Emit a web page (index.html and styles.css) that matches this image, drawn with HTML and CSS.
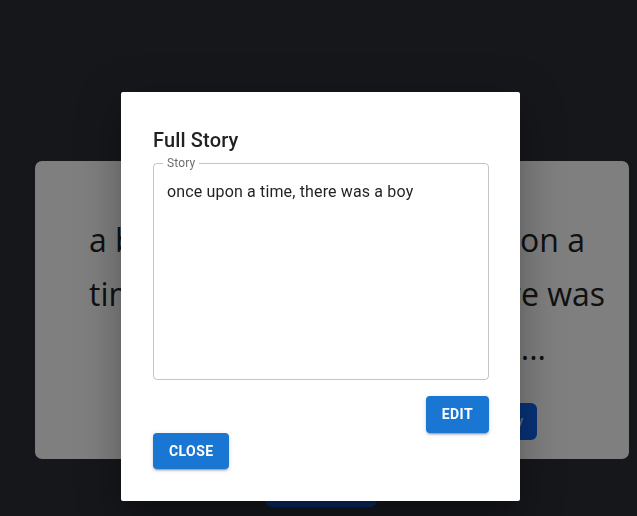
FILE: index.html
```html
<!DOCTYPE html>
<html lang="en">
<head>
<meta charset="utf-8">
<title>Story Maker</title>
<link rel="stylesheet" href="styles.css">
</head>
<body>
<div class="app">
  <h1 class="app-title">STORY MAKER</h1>
  <section class="story-card">
    <div class="preview">
      <div class="line line-1"><span>a boy who lived</span><span>once upon a</span></div>
      <div class="line line-2"><span>time, long ago,</span><span>there was</span></div>
      <div class="line line-3"><span>a little boy ...</span></div>
    </div>
    <div class="card-actions">
      <button class="card-btn">Read Full Story</button>
    </div>
  </section>
  <div class="bottom-actions">
    <button class="page-btn">New Story</button>
  </div>
</div>

<div class="backdrop"></div>
<div class="dialog" role="dialog">
  <h2 class="dialog-title">Full Story</h2>
  <div class="field">
    <span class="field-label">Story</span>
    <div class="field-input">once upon a time, there was a boy</div>
  </div>
  <div class="edit-row">
    <button class="btn">Edit</button>
  </div>
  <div class="close-row">
    <button class="btn">Close</button>
  </div>
</div>
</body>
</html>
```
FILE: styles.css
```css
html, body {
  margin: 0;
  padding: 0;
}
body {
  background: #2c2e36;
  min-height: 100vh;
  font-family: "Open Sans", "Liberation Sans", sans-serif;
  overflow: hidden;
}
.app {
  padding: 86px 0 0 5px;
}
.app-title {
  margin: 0;
  text-align: center;
  font-family: "Open Sans", sans-serif;
  font-weight: 700;
  font-size: 36px;
  line-height: 44px;
  letter-spacing: 0.5px;
  color: #ffffff;
}
.story-card {
  margin: 31px 0 0 30px;
  width: 594px;
  box-sizing: border-box;
  background: #ffffff;
  border-radius: 7px;
  padding: 52px 20px 19px 54px;
  color: #222222;
}
.preview {
  font-size: 32px;
  line-height: 54px;
}
.line {
  display: flex;
  justify-content: space-between;
  white-space: nowrap;
}
.line-1 { width: 496px; }
.line-2 { width: 516px; }
.line-3 { width: 457px; justify-content: flex-end; }
.card-actions {
  margin-top: 28px;
  display: flex;
  justify-content: flex-end;
  margin-right: 72px;
}
.card-btn {
  font-family: "Open Sans", sans-serif;
  font-size: 16px;
  line-height: 25px;
  padding: 6px 14px;
  border: none;
  border-radius: 6px;
  background: #1064f0;
  color: #ffffff;
}
.bottom-actions {
  display: flex;
  justify-content: center;
  margin-top: 8px;
}
.page-btn {
  width: 112px;
  height: 40px;
  border: none;
  border-radius: 7px;
  background: #0c54c0;
  color: #ffffff;
  font-family: "Open Sans", sans-serif;
  font-size: 16px;
}
.backdrop {
  position: fixed;
  inset: 0;
  background: rgba(0, 0, 0, 0.5);
}
.dialog {
  position: absolute;
  left: 121px;
  top: 92px;
  width: 399px;
  height: 409px;
  box-sizing: border-box;
  padding: 32px 31px 32px 32px;
  background: #ffffff;
  border-radius: 2px;
  box-shadow: 0px 11px 15px -7px rgba(0,0,0,0.2), 0px 24px 38px 3px rgba(0,0,0,0.14), 0px 9px 46px 8px rgba(0,0,0,0.12);
  font-family: Roboto, "Liberation Sans", sans-serif;
  display: flex;
  flex-direction: column;
}
.dialog-title {
  margin: 0;
  font-family: Roboto, sans-serif;
  font-weight: 500;
  font-size: 20px;
  line-height: 32px;
  letter-spacing: 0.15px;
  color: rgba(0, 0, 0, 0.87);
}
.field {
  position: relative;
  margin-top: 7px;
  height: 217px;
  box-sizing: border-box;
  border: 1px solid rgba(0, 0, 0, 0.23);
  border-radius: 4px;
  padding: 15.5px 13px;
}
.field-label {
  position: absolute;
  top: -7px;
  left: 9px;
  padding: 0 4px;
  background: #ffffff;
  font-size: 12px;
  line-height: 12px;
  letter-spacing: 0.15px;
  color: rgba(0, 0, 0, 0.6);
}
.field-input {
  font-size: 16px;
  line-height: 23px;
  letter-spacing: 0.15px;
  color: rgba(0, 0, 0, 0.87);
}
.edit-row {
  margin-top: 16px;
  display: flex;
  justify-content: flex-end;
}
.close-row {
  display: flex;
  justify-content: flex-start;
}
.btn {
  font-family: Roboto, sans-serif;
  font-weight: 700;
  font-size: 14px;
  line-height: 24.5px;
  letter-spacing: 0.4px;
  text-transform: uppercase;
  padding: 6px 16px;
  border: none;
  border-radius: 4px;
  background: #1976d2;
  color: #ffffff;
  box-shadow: 0px 3px 1px -2px rgba(0,0,0,0.2), 0px 2px 2px 0px rgba(0,0,0,0.14), 0px 1px 5px 0px rgba(0,0,0,0.12);
}
```
